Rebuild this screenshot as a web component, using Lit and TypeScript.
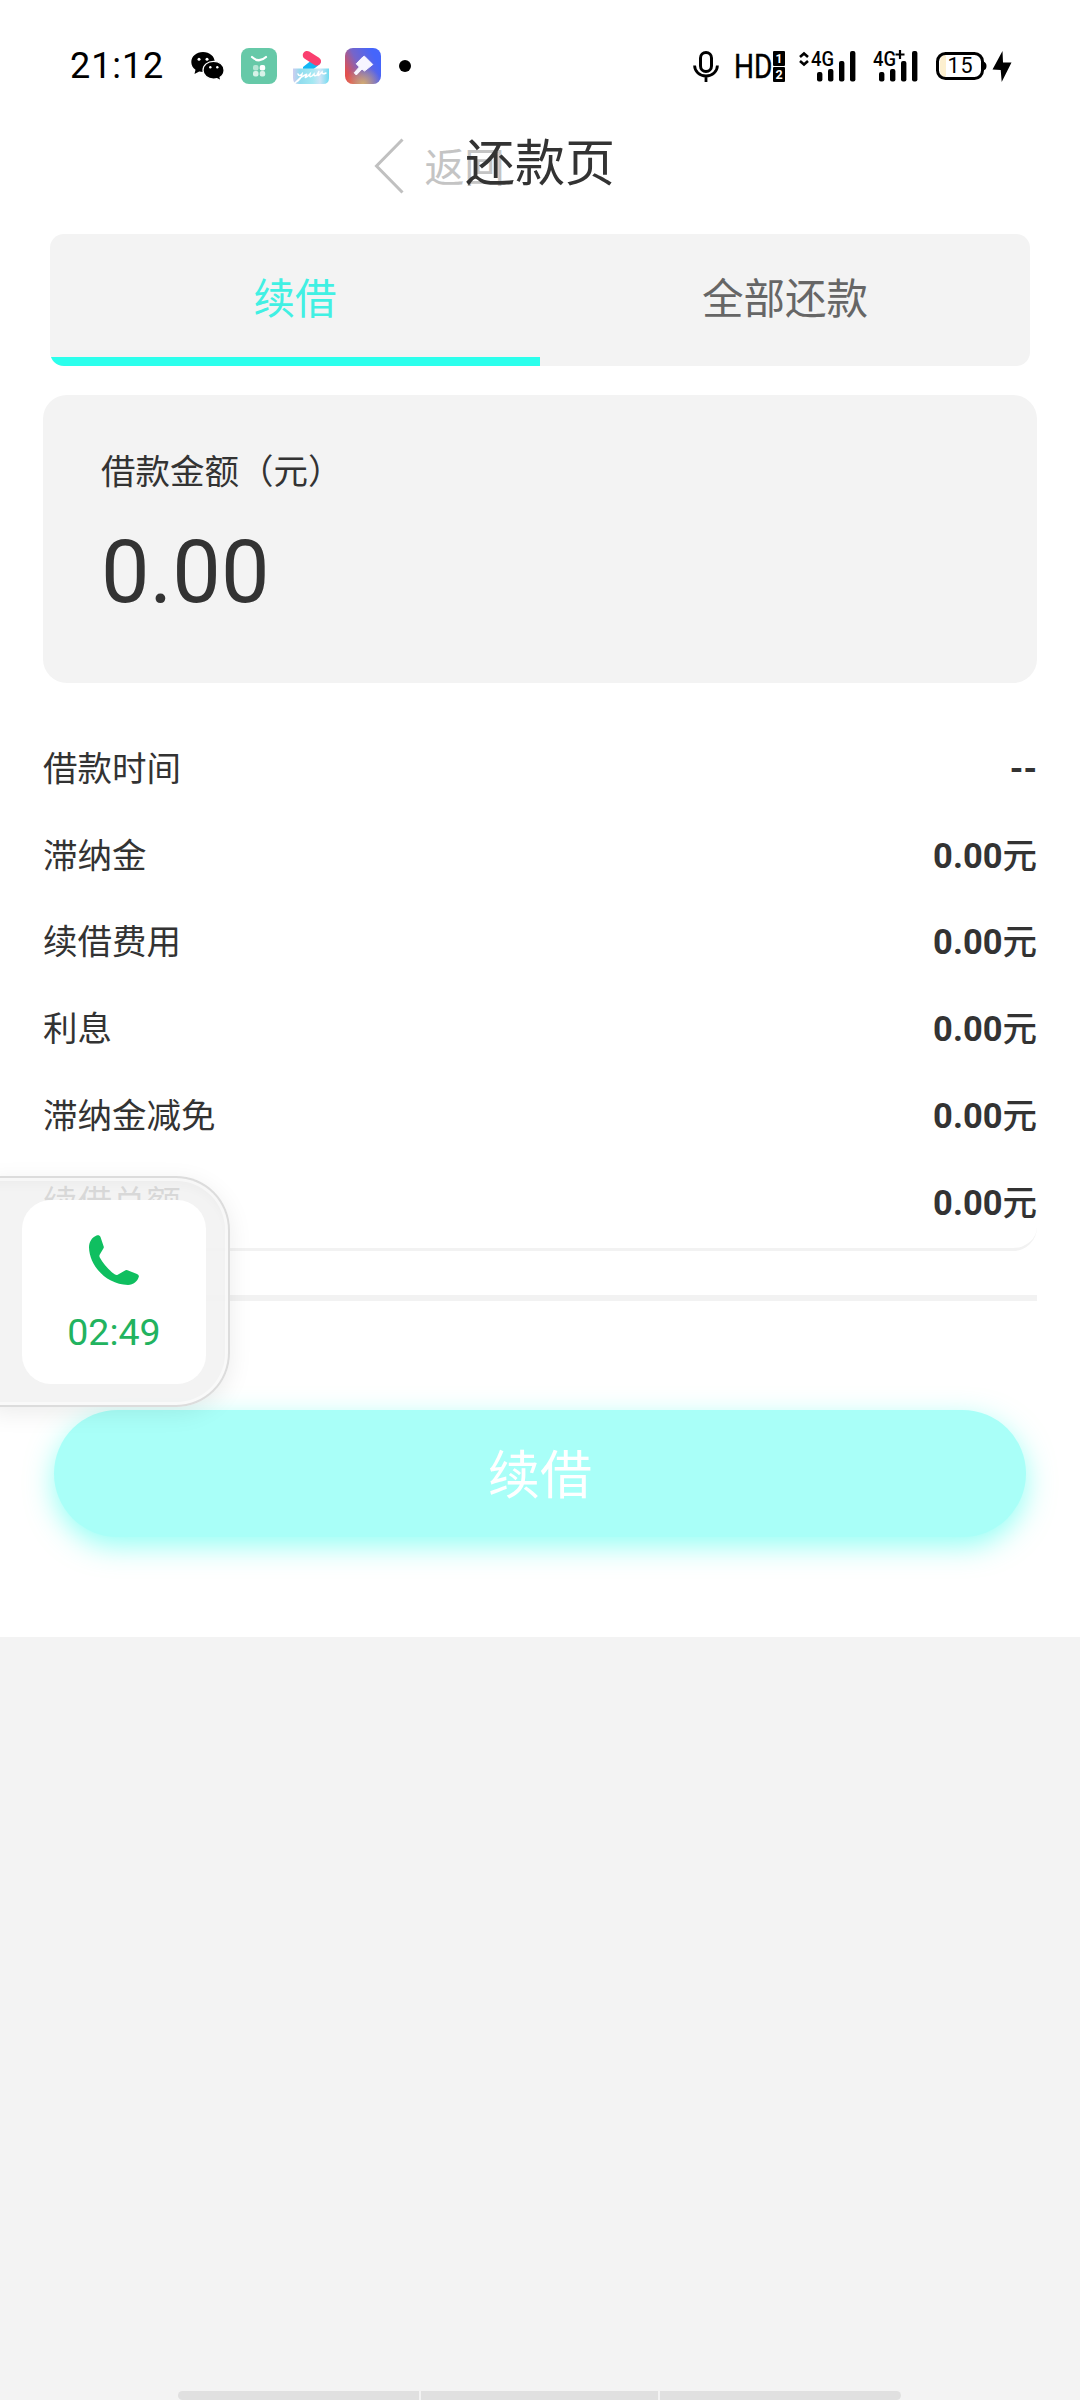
import { LitElement, html, css, svg } from "lit";
import { customElement, property } from "lit/decorators.js";

const signalBars = svg`
  <rect x="0" y="21" width="5.4" height="9.4" rx="2"/>
  <rect x="11" y="18" width="5.4" height="12.4" rx="2"/>
  <rect x="22" y="10" width="5.4" height="20.4" rx="2"/>
  <rect x="33" y="0" width="5.4" height="30.4" rx="2"/>`;

@customElement("status-bar")
class StatusBar extends LitElement {
  static styles = css`
    :host { display: flex; justify-content: space-between; height: 130px; box-sizing: border-box; padding: 46px 68px 0 70px; color: #000; }
    .side { display: flex; align-items: center; height: 40px; }
    .time { width: 121px; font: 400 36px/40px Roboto, sans-serif; letter-spacing: 0.9px; white-space: nowrap; }
    svg { display: block; flex: none; overflow: visible; }
    .apps { display: flex; align-items: center; gap: 16px; }
    .t { font-family: Roboto, sans-serif; }
    .mic { margin-right: 17px; }
    .hd { margin-right: 14px; }
    .sig1 { margin-right: 17px; }
    .sig2 { margin-right: 18px; }
    .bat { margin-right: 5px; }
  `;
  render() {
    return html`
      <div class="side">
        <div class="time">21:12</div>
        <div class="apps">
          <svg width="34" height="30" viewBox="0 0 34 30">
            <path d="M12 1C5.4 1 .3 5.400 .3 11c0 3.200 1.600 5.900 4.200 7.800L3.500 23l4.700-2.400c1.200.3 2.400.5 3.800.5 6.600 0 11.700-4.500 11.700-10.100S18.600 1 12 1z"/>
            <path d="M22.600 10.300c-6 0-10.600 3.900-10.600 8.900s4.600 8.900 10.600 8.900c1.200 0 2.300-.1 3.300-.4l4.200 2.100-1-3.500c2.500-1.700 4-4.200 4-7.100 0-5-4.600-8.900-10.500-8.900z" stroke="#fff" stroke-width="1.300"/>
            <g fill="#fff"><circle cx="8" cy="8.300" r="1.500"/><circle cx="16" cy="8.300" r="1.500"/><circle cx="19.300" cy="16.300" r="1.200"/><circle cx="26.300" cy="16.300" r="1.200"/></g>
          </svg>
          <svg width="36" height="36" viewBox="0 0 36 36">
            <rect width="36" height="36" rx="8" fill="#66c9a8"/>
            <path d="M11 9Q18 15.500 25 9" fill="none" stroke="#fff" stroke-width="2.200" stroke-linecap="round"/>
            <rect x="12" y="17" width="5.500" height="5.500" rx="2" fill="#b6e6d5"/>
            <rect x="18.700" y="17" width="5.500" height="5.500" rx="2" fill="#fff"/>
            <rect x="12" y="23" width="5.500" height="5.500" rx="2" fill="#d8f2e8"/>
            <rect x="18.700" y="23" width="5.500" height="5.500" rx="2" fill="#d8f2e8"/>
          </svg>
          <svg width="36" height="36" viewBox="0 0 36 36">
            <defs><linearGradient id="yk" x1="0" x2="1" y1="0" y2="0"><stop offset="0" stop-color="#d0cdf0"/><stop offset=".2" stop-color="#8fdcee"/><stop offset=".55" stop-color="#a4e8f2"/><stop offset=".75" stop-color="#d0e4f6"/><stop offset="1" stop-color="#6fdcf0"/></linearGradient></defs>
            <path d="M10 21.500V19L17 13.500 28 13.500Q27 16.500 24.500 18L20 21.500z" fill="#12b7f5"/>
            <path d="M14 7.200 23.800 13.300" stroke="#fa3f6f" stroke-width="8.500" stroke-linecap="round"/>
            <path d="M0 20.500H36V30Q36 36 30 36H6Q0 36 0 30z" fill="url(#yk)"/>
            <path d="M5 26q1 3 4 0q-1 6-6 8q4-5 9-7q3-2 1 1q-2 3 2 0l2-2q-1 4 2 2l2-2q0 3 3 1l2-4q-2 6 0 4l3-3q0 3 4 1" fill="none" stroke="#fff" stroke-width="1.500" stroke-linecap="round"/>
          </svg>
          <svg width="36" height="36" viewBox="0 0 36 36">
            <defs>
              <linearGradient id="cl" x1="0" y1=".6" x2=".8" y2=".2"><stop offset="0" stop-color="#e2504f"/><stop offset=".45" stop-color="#7665c9"/><stop offset="1" stop-color="#4565fb"/></linearGradient>
              <radialGradient id="cy" cx=".5" cy="1" r=".5"><stop offset="0" stop-color="#d2ac72"/><stop offset="1" stop-color="#d2ac72" stop-opacity="0"/></radialGradient>
            </defs>
            <rect width="36" height="36" rx="8" fill="url(#cl)"/><rect width="36" height="36" rx="8" fill="url(#cy)"/>
            <path d="M17.800 9 19.500 8.200 27.800 16.500 19.500 23 17 21 11.300 27 9.200 24.800 14.300 19 11.200 15.800z" fill="#f7f5ff" stroke="#f7f5ff" stroke-width="1" stroke-linejoin="round"/>
          </svg>
          <svg width="16" height="12" viewBox="0 0 16 12"><circle cx="8" cy="6" r="6"/></svg>
        </div>
      </div>
      <div class="side">
        <svg class="mic" width="26" height="31" viewBox="0 0 26 31">
          <rect x="7.500" y="1.500" width="11" height="19" rx="5.500" fill="none" stroke="#000" stroke-width="3"/>
          <path d="M1.600 14.500a11.400 10.500 0 0 0 22.800 0M13 25v6" fill="none" stroke="#000" stroke-width="2.800"/>
        </svg>
        <svg class="hd" width="49" height="31" viewBox="0 0 49 31">
          <text class="t" x="-2" y="27" font-size="33" textLength="38.500" lengthAdjust="spacingAndGlyphs" stroke="#000" stroke-width=".4">HD</text>
          <rect x="37" y="0" width="12" height="15" rx="1"/><rect x="37" y="16" width="12" height="15" rx="1"/>
          <text class="t" x="43" y="11.800" font-size="12" font-weight="700" fill="#fff" text-anchor="middle">1</text>
          <text class="t" x="43" y="28" font-size="12.500" font-weight="700" fill="#fff" text-anchor="middle">2</text>
        </svg>
        <svg class="sig1" width="57" height="31" viewBox="0 0 57 31">
          <path d="M1 6 5 2.500 9 6M1 10 5 13.500 9 10" fill="none" stroke="#000" stroke-width="2.600"/>
          <text class="t" x="12" y="15" font-size="20" font-weight="500" textLength="23" lengthAdjust="spacingAndGlyphs">4G</text>
          <g transform="translate(18 0)">${signalBars}</g>
        </svg>
        <svg class="sig2" width="45" height="31" viewBox="0 0 45 31">
          <text class="t" x="0" y="15" font-size="20" font-weight="500" textLength="23" lengthAdjust="spacingAndGlyphs">4G</text>
          <path d="M22.500 3.500h9M27 -1v9" stroke="#000" stroke-width="2.200"/>
          <g transform="translate(6 0)">${signalBars}</g>
        </svg>
        <svg class="bat" width="51" height="28" viewBox="0 0 51 28">
          <path d="M10 3H9Q4 4 4 10v8q0 6 5 7h1z" fill="#fdf0cf"/>
          <rect x="1.500" y="1.500" width="45" height="25" rx="8" fill="none" stroke="#000" stroke-width="3"/>
          <path d="M47.500 9.500q3 1 3 4.500t-3 4.500z"/>
          <text class="t" x="24.500" y="21.300" font-size="21.500" text-anchor="middle" letter-spacing=".8">15</text>
        </svg>
        <svg width="20" height="31" viewBox="0 0 20 31"><path d="M10.500 0 .5 18.500 8.700 19 9.700 31 19.500 11.500 11 11.500z"/></svg>
      </div>`;
  }
}

@customElement("detail-row")
class DetailRow extends LitElement {
  @property() label = "";
  @property() value = "";
  static styles = css`
    :host { display: flex; justify-content: space-between; align-items: center; height: 86.8px; font-size: 34.5px; line-height: 50px; color: #333; white-space: nowrap; }
    .value { font-weight: 700; }
    .unit { font-weight: 500; }
  `;
  render() {
    const unit = this.value.endsWith("元");
    return html`<span>${this.label}</span>
      <span class="value">${unit ? this.value.slice(0, -1) : this.value}${unit ? html`<span class="unit">元</span>` : ""}</span>`;
  }
}

@customElement("call-bubble")
class CallBubble extends LitElement {
  static styles = css`
    :host { display: block; box-sizing: border-box; border: 2px solid #dcdcdc; border-left: 0; border-radius: 0 54px 54px 0; background: rgba(241, 241, 241, 0.87);
      box-shadow: 0 6px 24px rgba(0, 0, 0, 0.08), inset 0 0 0 3px rgba(255, 255, 255, 0.5), inset 0 8px 10px rgba(0, 0, 0, 0.025); padding: 22px 22px 22px 32px; }
    .tile { height: 184px; box-sizing: border-box; padding-top: 34px; border-radius: 29px; background: #fff; display: flex; flex-direction: column; align-items: center; gap: 24px; color: #22b35f; }
    svg { display: block; }
    .time { font: 400 37.500px/44px Roboto, sans-serif; }
  `;
  render() {
    return html`<div class="tile">
      <svg width="52" height="52" viewBox="0 0 52 52"><path fill="#0fbf60" d="M8.500 1.500C10.300 .9 11.800 1.300 12.500 3L15.700 12.500Q16 13.400 15.500 14.200L11.800 20.500Q11 22 11.800 23.500C15.500 30 21 36.500 27 40.500Q28.300 41.200 29.700 40.700L37.500 36.300Q38.500 35.800 39.500 36.200L49 40Q51 40.900 50.900 42.500C49.500 47.500 45.500 50.900 40 50.900C18 50.500 1.500 31.500 1 13.500C1 8.500 3.500 3.500 8.500 1.500z"/></svg>
      <span class="time">02:49</span></div>`;
  }
}

@customElement("app-root")
class AppRoot extends LitElement {
  static styles = css`
    :host { display: block; font-family: Roboto, "Noto Sans CJK SC", sans-serif; color: #333; }
    .screen { position: relative; width: 1080px; height: 2400px; overflow: hidden; background: #f3f3f3; display: flex; flex-direction: column; justify-content: space-between; }
    .page { height: 1637px; background: #fff; }
    .nav { display: grid; grid-template-columns: 1fr auto 1fr; grid-template-rows: 72px; height: 72px; align-items: start; }
    .back { display: flex; align-items: flex-start; justify-self: end; gap: 21px; margin-right: -39.500px; color: #c4c4c4; font-size: 40px; line-height: 58px; white-space: nowrap; }
    .back svg { display: block; margin-top: 8px; }
    .back span { padding-top: 10px; }
    .title { position: relative; font-size: 50px; line-height: 68px; }
    .tabs { display: flex; height: 132px; margin: 32px 50px 0; border-radius: 14px; overflow: hidden; background: #f3f3f3; }
    .tab { flex: 1; box-sizing: border-box; height: 132px; border-bottom: 9px solid transparent; padding-top: 1px; display: flex; align-items: center; justify-content: center; font-size: 41.500px; color: #666; }
    .tab.active { color: #41f0e3; border-image: linear-gradient(#2bffec, #2bffec) 0 0 9 0; }
    .card { box-sizing: border-box; height: 288px; margin: 29px 43px 0; padding: 52px 58px; border-radius: 24px; background: #f3f3f3; }
    .label { font-size: 34.500px; line-height: 50px; }
    .amount { margin-top: 24px; font-size: 86.400px; line-height: 104px; }
    .rows { margin: 0 43px; box-sizing: border-box; height: 568px; padding-top: 42.500px; border-bottom: 3px solid #f2f2f2; border-radius: 0 0 24px 24px; }
    .rule { height: 6px; margin: 44px 43px 0; background: #f2f2f2; }
    .submit { display: flex; align-items: center; justify-content: center; box-sizing: border-box; width: 972px; height: 127px; margin: 109px 54px 0; padding: 6px 0 0; border: 0; border-radius: 64px; background: #a9fff8; box-shadow: 0 9px 28px rgba(43, 255, 236, 0.5); color: #fff; font: inherit; font-size: 52px; line-height: 76px; }
    .bubble { position: absolute; left: -10px; top: 1176px; width: 240px; height: 231px; }
    .gesture { display: grid; grid-template-columns: 241px 237px 241px; gap: 2px; width: 723px; height: 9px; margin-left: 178px; border-radius: 6px; overflow: hidden; }
    .gesture i { background: #e0e0e0; }
  `;
  render() {
    const rows = [["借款时间", "--"], ["滞纳金", "0.00元"], ["续借费用", "0.00元"], ["利息", "0.00元"], ["滞纳金减免", "0.00元"], ["续借总额", "0.00元"]];
    return html`<div class="screen">
      <main class="page">
        <status-bar></status-bar>
        <header class="nav">
          <div class="back"><svg width="30" height="56" viewBox="0 0 30 56"><path d="M28.500 1.500 2.500 28 28.500 54.500" fill="none" stroke="#c0c0c0" stroke-width="3"/></svg><span>返回</span></div>
          <div class="title">还款页</div>
        </header>
        <div class="tabs"><div class="tab active">续借</div><div class="tab">全部还款</div></div>
        <section class="card"><div class="label">借款金额（元）</div><div class="amount">0.00</div></section>
        <section class="rows">${rows.map(([l, v]) => html`<detail-row .label=${l} .value=${v}></detail-row>`)}</section>
        <div class="rule"></div>
        <button class="submit">续借</button>
      </main>
      <div class="gesture"><i></i><i></i><i></i></div>
      <call-bubble class="bubble"></call-bubble>
    </div>`;
  }
}
